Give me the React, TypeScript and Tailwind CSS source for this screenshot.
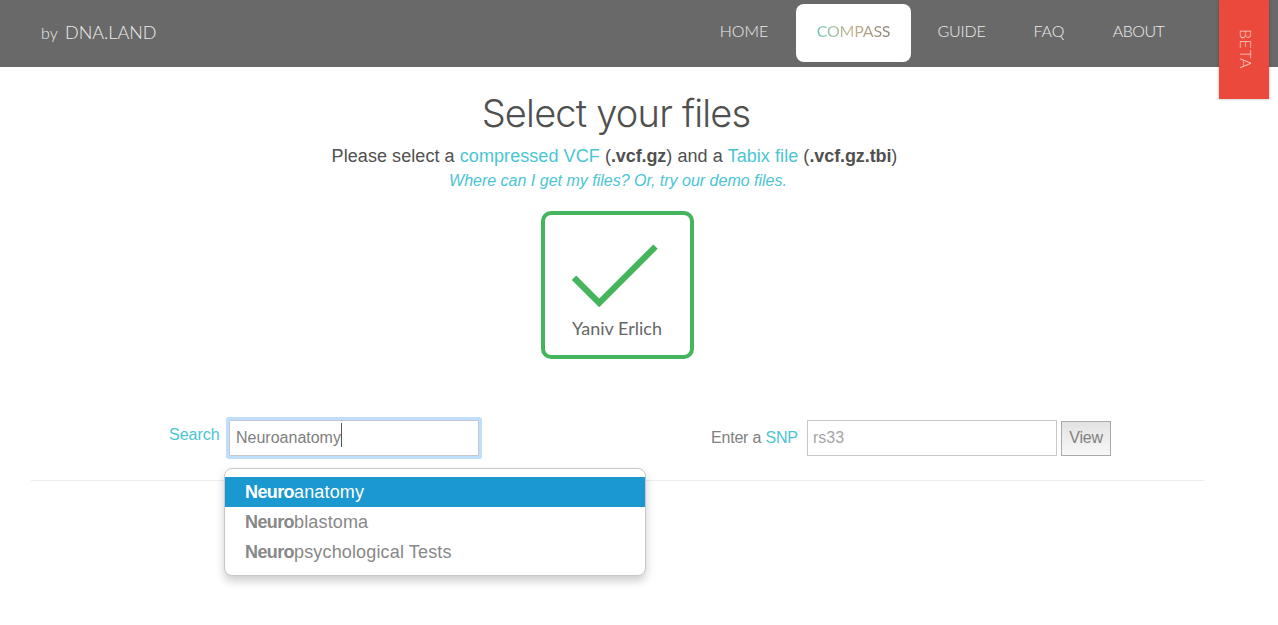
import React from "react";

const navItems = [
  { label: "HOME", cls: "w-[104px]" },
  { label: "COMPASS", cls: "w-[115px]" },
  { label: "GUIDE", cls: "w-[101px] tracking-[-0.2px]" },
  { label: "FAQ", cls: "w-[74px]" },
  { label: "ABOUT", cls: "w-[105px] tracking-[-0.5px]" },
];

const suggestions = ["anatomy", "blastoma", "psychological Tests"];

function Header() {
  return (
    <header className="flex h-[67px] items-start justify-between bg-[#696969] pr-[87px] pl-[41px] font-['Lato',sans-serif] font-light text-[#ededed]">
      <div className="flex items-baseline pt-[19px] leading-[26px] whitespace-nowrap">
        <span className="w-6 text-[16px]">by</span>
        <span className="text-[18px]">DNA.LAND</span>
      </div>
      <nav className="flex pt-1">
        {navItems.map((item) =>
          item.label === "COMPASS" ? (
            <a key={item.label} className="flex h-[58px] w-[115px] justify-center rounded-[8px] bg-white pt-[15px] text-[16px] leading-6">
              <span className="h-6 bg-linear-to-r from-[#6cc5b5] via-[#c6b48a] to-[#8a8178] bg-clip-text font-normal tracking-[-0.2px] text-transparent">COMPASS</span>
            </a>
          ) : (
            <a key={item.label} className={`flex h-[58px] justify-center pt-[15px] text-[16px] leading-6 ${item.cls}`}>
              {item.label}
            </a>
          ),
        )}
      </nav>
      <div className="absolute top-0 left-[1219px] flex h-[99px] w-[50px] items-center justify-center bg-[#eb493b] pl-[3px] text-[16px] text-[#f9c9c4] shadow-[0_0_3px_rgba(0,0,0,0.3)]">
        <span className="tracking-[0.5px] [writing-mode:vertical-rl]">BETA</span>
      </div>
    </header>
  );
}

function FileCard() {
  return (
    <div className="mt-[18px] flex h-[148px] w-[153px] flex-col items-center rounded-[10px] border-4 border-[#45b55d]">
      <svg className="mt-[26px] h-[70px] w-[100px]" viewBox="0 0 100 70" fill="none" stroke="#45b55d" strokeWidth="6.2">
        <path d="M7 36.7 L32.2 61.9 L88.5 5.6" />
      </svg>
      <span className="mt-[5px] font-['Lato',sans-serif] text-[18px] leading-6 whitespace-nowrap text-[#666]">Yaniv Erlich</span>
    </div>
  );
}

function SearchRow() {
  return (
    <div className="relative ml-[31px] flex h-[70px] w-[1173px] items-start border-b border-[#ececec] text-[16px] text-[#808080]">
      <a className="mt-[14px] ml-[138px] w-[60px] leading-5 text-[#4bc5d3]">Search</a>
      <div className="mt-[9px] flex h-[36px] w-[250px] items-center rounded-[1px] border border-[#c4c8cc] bg-white pl-[6px] shadow-[0_0_0_3px_#bfdffc]">
        <span className="leading-5">Neuroanatomy</span>
        <span className="mb-1.5 h-6 w-px bg-[#555]" />
      </div>
      <label className="mt-[17px] ml-[232px] w-[96px] leading-5 tracking-[-0.2px] whitespace-nowrap">
        Enter a <a className="text-[#4bc5d3]">SNP</a>
      </label>
      <div className="mt-[9px] flex h-[36px] w-[250px] items-center border border-[#c8c8c8] bg-white pl-[5px] text-[#a5a5a5]">rs33</div>
      <button className="mt-[10px] ml-1 h-[35px] w-[50px] border border-[#aaa] bg-linear-to-b from-[#e2e2e2] to-[#f8f8f8] pb-[2px] text-center tracking-[-0.2px]">View</button>
      <ul className="absolute top-[57px] left-[193px] h-[108px] w-[422px] rounded-[8px] border border-[#c8c8c8] bg-white py-2 text-[18px] leading-[30px] shadow-[0_5px_10px_rgba(0,0,0,0.2)]">
        {suggestions.map((rest, i) => (
          <li key={rest} className={i === 0 ? "h-[30px] bg-[#1b98d0] pl-5 text-white" : "h-[30px] pl-5 text-[#888]"}>
            <b className="tracking-[-0.6px]">Neuro</b>
            <span className="tracking-[0.15px]">{rest}</span>
          </li>
        ))}
      </ul>
    </div>
  );
}

export default function App() {
  return (
    <div className="relative h-[625px] w-[1278px] overflow-hidden bg-white font-['Liberation_Sans',Arial,sans-serif]">
      <Header />
      <main>
        <section className="flex w-[1234px] flex-col items-center text-[#505050]">
          <h1 className="mt-[21px] pr-[2px] font-['Inter',sans-serif] text-[38px] leading-[50px] font-light tracking-[-0.8px]">Select your files</h1>
          <p className="mt-[6px] pr-[5px] text-[18px] leading-6 tracking-[0.07px] whitespace-nowrap">
            Please select a <a className="text-[#4bc5d3]">compressed VCF</a> (<b className="tracking-[-0.1px]">.vcf.gz</b>) and a <a className="text-[#4bc5d3]">Tabix file</a> (<b className="tracking-[-0.1px]">.vcf.gz.tbi</b>)
          </p>
          <p className="mt-px pl-[2px] text-[16px] leading-6 text-[#4bc5d3] italic">Where can I get my files? Or, try our demo files.</p>
          <FileCard />
        </section>
        <div className="pt-[52px]">
          <SearchRow />
        </div>
      </main>
    </div>
  );
}
